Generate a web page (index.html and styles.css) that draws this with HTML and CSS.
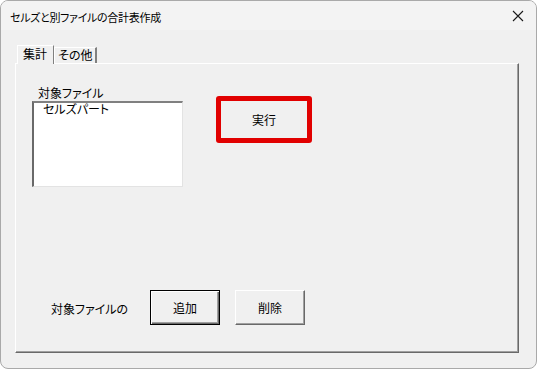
FILE: index.html
```html
<!DOCTYPE html>
<html lang="ja">
<head>
<meta charset="utf-8">
<link rel="stylesheet" href="styles.css">
</head>
<body>
<div class="window">
  <div class="titlebar">
    <span class="title">セルズと別ファイルの合計表作成</span>
    <svg class="close" width="12" height="12" viewBox="0 0 12 12"><path d="M1 1L11 11M11 1L1 11" stroke="#1a1a1a" stroke-width="1.1" fill="none"/></svg>
  </div>
  <div class="content">
    <div class="tabs">
      <div class="tab active">集計</div>
      <div class="tab">その他</div>
    </div>
    <div class="panel">
      <div class="top-row">
        <div class="files">
          <div class="label">対象ファイル</div>
          <div class="listbox"><div class="item">セルズパート</div></div>
        </div>
        <div class="highlight"><div class="btn-inner">実行</div></div>
      </div>
      <div class="bottom-row">
        <span class="bottom-label">対象ファイルの</span>
        <div class="btn default">追加</div>
        <div class="btn">削除</div>
      </div>
    </div>
  </div>
</div>
</body>
</html>
```

FILE: styles.css
```css
* { box-sizing: border-box; }
html, body { margin: 0; padding: 0; background: #ffffff; }
body {
  font-family: "Noto Sans CJK JP", "Noto Sans", sans-serif;
  font-size: 12px;
  font-feature-settings: "palt";
  color: #000;
}
.window {
  width: 537px;
  height: 369px;
  border: 1px solid #a9a9a9;
  border-radius: 8px;
  background: #f0f0f0;
  overflow: hidden;
  display: flex;
  flex-direction: column;
}
.titlebar {
  height: 29px;
  background: #f3f3f3;
  display: flex;
  align-items: center;
  padding-left: 9px;
  padding-right: 12px;
}
.title { flex: 1; font-size: 11px; letter-spacing: -0.3px; line-height: 14px; margin-top: 2px; }
.close { display: block; margin-top: 1px; }
.content {
  flex: 1;
  padding: 15px 17px 15px 14px;
  display: flex;
  flex-direction: column;
}
.tabs { display: flex; height: 18px; padding-left: 2px; align-items: flex-end; }
.tab {
  height: 16px;
  line-height: 14px;
  padding: 0 3px 0 3px;
  border-left: 1px solid #ffffff;
  border-top: 1px solid #ffffff;
  border-right: 2px solid #808080;
  font-size: 12px;
}
.tab.active {
  height: 19px;
  margin-bottom: -1px;
  padding: 1px 6px 0 5px;
  background: #f0f0f0;
  position: relative;
  z-index: 1;
  border-right: 1px solid #808080;
}
.panel {
  flex: 1;
  border-left: 1px solid #ffffff;
  border-top: 1px solid #ffffff;
  border-right: 1px solid #696969;
  border-bottom: 1px solid #696969;
  box-shadow: inset -1px -1px 0 #a0a0a0;
  display: flex;
  flex-direction: column;
  padding: 0 0 27px 16px;
}
.top-row { display: flex; align-items: flex-start; }
.files { margin-top: 21px; width: 151px; }
.label { padding-left: 6px; line-height: 15px; height: 16px; }
.listbox {
  height: 86px;
  background: #ffffff;
  border-top: 2px solid #808080;
  border-left: 2px solid #696969;
  border-right: 1px solid #e3e3e3;
  border-bottom: 1px solid #e3e3e3;
  padding: 0 0 0 9px;
}
.item { line-height: 12px; }
.highlight {
  margin-left: 33px;
  margin-top: 32px;
  width: 96px;
  height: 47px;
  border: 5px solid #e10000;
  border-radius: 3px;
}
.btn-inner {
  height: 100%;
  display: flex;
  align-items: center;
  justify-content: center;
  padding-bottom: 1px;
}
.bottom-row {
  margin-top: auto;
  display: flex;
  align-items: center;
  height: 35px;
  padding-left: 19px;
}
.bottom-label { width: 99px; padding-top: 1px; white-space: nowrap; }
.btn {
  width: 70px;
  height: 35px;
  display: flex;
  align-items: center;
  justify-content: center;
  border-top: 1px solid #ffffff;
  border-left: 1px solid #ffffff;
  border-right: 1px solid #696969;
  border-bottom: 1px solid #696969;
  box-shadow: inset -1px -1px 0 #a0a0a0;
  margin-left: 15px;
}
.btn.default {
  width: 70px;
  margin-left: 0;
  border: 1px solid #000000;
  box-shadow: inset 1px 1px 0 #ffffff, inset -1px -1px 0 #696969, inset -2px -2px 0 #a0a0a0;
}
```
